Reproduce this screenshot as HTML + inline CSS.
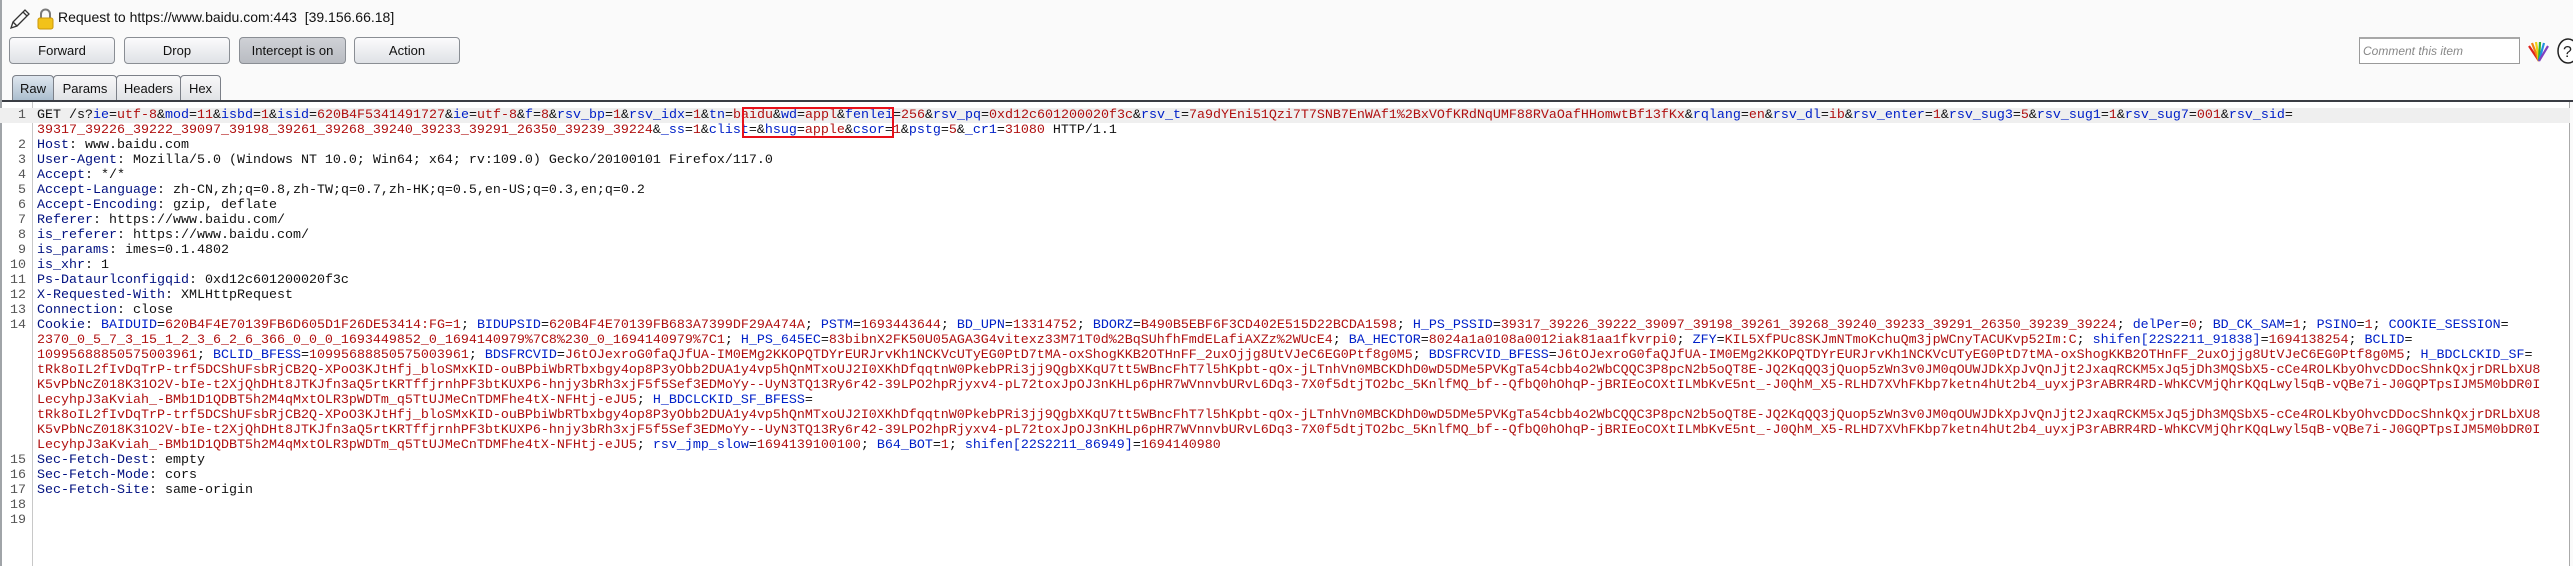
<!DOCTYPE html>
<html><head><meta charset="utf-8"><style>
*{margin:0;padding:0;box-sizing:border-box}
body{width:2573px;height:566px;overflow:hidden;background:#fafafa;font-family:"Liberation Sans",Arial,sans-serif;position:relative}
.lb{position:absolute;left:0;top:0;width:2px;height:566px;background:#a0a4a8}
.title{position:absolute;left:58px;top:9px;font-size:14px;color:#111;white-space:pre}
.btn{position:absolute;top:37px;height:27px;border:1px solid #8a8e94;border-radius:4px;background:linear-gradient(#fbfbfc,#dfe2e6);font-size:13px;color:#111;text-align:center;line-height:25px}
.btn.on{background:linear-gradient(#cfd1d6,#b9bcc2)}
.tab{position:absolute;top:75px;height:26px;border:1px solid #7c8088;border-bottom:none;border-radius:4px 4px 0 0;background:linear-gradient(#f8f8f9,#e0e2e5);font-size:13px;text-align:center;line-height:26px;color:#111}
.tab.sel{background:linear-gradient(#dfe7ef,#a9bccd)}
.edtop{position:absolute;left:2px;right:0;top:100px;height:2px;background:#3a3d44}
.ed{position:absolute;left:2px;top:102px;right:3px;height:464px;background:#fff;border-right:1px solid #aaa}
.gut{position:absolute;left:32px;top:102px;width:1px;height:464px;background:#c8c8c8}
.rows{position:absolute;left:0;top:108px;width:2570px}
.r{height:15px;line-height:15px;font-family:"Liberation Mono","Courier New",monospace;font-size:13.33px;white-space:pre;overflow:hidden;position:relative;color:#111}
.r.cur{background:#efefef}
.r i{font-style:normal;position:absolute;left:0;width:26px;text-align:right;color:#555}
.r b{font-weight:normal;position:absolute;left:37px;top:0}
.n{color:#0020c8}.v{color:#b01010}.h{color:#001080}
.box{position:absolute;left:742px;top:107px;width:152px;height:31px;border:2px solid #e8101a}
.cmt{position:absolute;left:2359px;top:37px;width:161px;height:27px;border:1px solid #9a9a9a;border-top:2px solid #a8a8a8;background:#fff;font-size:12px;font-style:italic;color:#888;line-height:24px;padding-left:3px}
</style></head><body>
<div class="lb"></div>
<svg style="position:absolute;left:8px;top:8px" width="24" height="22" viewBox="0 0 24 22"><path d="M3 20 L5 14 L17 2 L21 6 L9 18 Z M5 14 L9 18 M15 4 L19 8" fill="none" stroke="#333" stroke-width="1.3"/></svg>
<svg style="position:absolute;left:37px;top:8px" width="17" height="22" viewBox="0 0 17 22"><path d="M4 10 V6 a4.5 4.5 0 0 1 9 0 V10" fill="none" stroke="#7a7a7a" stroke-width="2"/><rect x="1" y="10" width="15" height="11" rx="2" fill="#f2c21a" stroke="#c9960a"/></svg>
<div class="title">Request to https://www.baidu.com:443  [39.156.66.18]</div>
<div class="btn" style="left:9px;width:106px">Forward</div>
<div class="btn" style="left:124px;width:106px">Drop</div>
<div class="btn on" style="left:239px;width:107px">Intercept is on</div>
<div class="btn" style="left:264px;display:none"></div>
<div class="btn" style="left:354px;width:106px">Action</div>
<div class="cmt">Comment this item</div>
<svg style="position:absolute;left:2526px;top:40px" width="26" height="22" viewBox="0 0 26 22"><g stroke-width="2.2" fill="none"><path d="M13 21 L3 6" stroke="#e0201a"/><path d="M13 21 L6 3" stroke="#f08010"/><path d="M13 21 L10 2" stroke="#f0d010"/><path d="M13 21 L14 2" stroke="#30b030"/><path d="M13 21 L18 3" stroke="#2090e0"/><path d="M13 21 L22 6" stroke="#8040c0"/></g></svg>
<svg style="position:absolute;left:2556px;top:38px" width="17" height="26" viewBox="0 0 17 26"><ellipse cx="12" cy="13" rx="10" ry="12" fill="#fff" stroke="#222" stroke-width="1.5"/><text x="7" y="19" font-family="Liberation Sans" font-size="16" fill="#222">?</text></svg>
<div class="tab sel" style="left:12px;width:42px">Raw</div>
<div class="tab" style="left:53px;width:64px">Params</div>
<div class="tab" style="left:116px;width:65px">Headers</div>
<div class="tab" style="left:180px;width:41px">Hex</div>
<div class="edtop"></div>
<div class="ed"></div>
<div class="gut"></div>
<div class="rows">
<div class="r cur"><i>1</i><b>GET /s?<span class="n">ie</span>=<span class="v">utf-8</span>&amp;<span class="n">mod</span>=<span class="v">11</span>&amp;<span class="n">isbd</span>=<span class="v">1</span>&amp;<span class="n">isid</span>=<span class="v">620B4F5341491727</span>&amp;<span class="n">ie</span>=<span class="v">utf-8</span>&amp;<span class="n">f</span>=<span class="v">8</span>&amp;<span class="n">rsv_bp</span>=<span class="v">1</span>&amp;<span class="n">rsv_idx</span>=<span class="v">1</span>&amp;<span class="n">tn</span>=<span class="v">baidu</span>&amp;<span class="n">wd</span>=<span class="v">appl</span>&amp;<span class="n">fenlei</span>=<span class="v">256</span>&amp;<span class="n">rsv_pq</span>=<span class="v">0xd12c601200020f3c</span>&amp;<span class="n">rsv_t</span>=<span class="v">7a9dYEni51Qzi7T7SNB7EnWAf1%2BxVOfKRdNqUMF88RVaOafHHomwtBf13fKx</span>&amp;<span class="n">rqlang</span>=<span class="v">en</span>&amp;<span class="n">rsv_dl</span>=<span class="v">ib</span>&amp;<span class="n">rsv_enter</span>=<span class="v">1</span>&amp;<span class="n">rsv_sug3</span>=<span class="v">5</span>&amp;<span class="n">rsv_sug1</span>=<span class="v">1</span>&amp;<span class="n">rsv_sug7</span>=<span class="v">001</span>&amp;<span class="n">rsv_sid</span>=</b></div>
<div class="r"><b><span class="v">39317_39226_39222_39097_39198_39261_39268_39240_39233_39291_26350_39239_39224</span>&amp;<span class="n">_ss</span>=<span class="v">1</span>&amp;<span class="n">clist</span>=&amp;<span class="n">hsug</span>=<span class="v">apple</span>&amp;<span class="n">csor</span>=<span class="v">1</span>&amp;<span class="n">pstg</span>=<span class="v">5</span>&amp;<span class="n">_cr1</span>=<span class="v">31080</span> HTTP/1.1</b></div>
<div class="r"><i>2</i><b><span class="h">Host</span>: www.baidu.com</b></div>
<div class="r"><i>3</i><b><span class="h">User-Agent</span>: Mozilla/5.0 (Windows NT 10.0; Win64; x64; rv:109.0) Gecko/20100101 Firefox/117.0</b></div>
<div class="r"><i>4</i><b><span class="h">Accept</span>: */*</b></div>
<div class="r"><i>5</i><b><span class="h">Accept-Language</span>: zh-CN,zh;q=0.8,zh-TW;q=0.7,zh-HK;q=0.5,en-US;q=0.3,en;q=0.2</b></div>
<div class="r"><i>6</i><b><span class="h">Accept-Encoding</span>: gzip, deflate</b></div>
<div class="r"><i>7</i><b><span class="h">Referer</span>: https://www.baidu.com/</b></div>
<div class="r"><i>8</i><b><span class="h">is_referer</span>: https://www.baidu.com/</b></div>
<div class="r"><i>9</i><b><span class="h">is_params</span>: imes=0.1.4802</b></div>
<div class="r"><i>10</i><b><span class="h">is_xhr</span>: 1</b></div>
<div class="r"><i>11</i><b><span class="h">Ps-Dataurlconfigqid</span>: 0xd12c601200020f3c</b></div>
<div class="r"><i>12</i><b><span class="h">X-Requested-With</span>: XMLHttpRequest</b></div>
<div class="r"><i>13</i><b><span class="h">Connection</span>: close</b></div>
<div class="r"><i>14</i><b><span class="h">Cookie</span>: <span class="n">BAIDUID</span>=<span class="v">620B4F4E70139FB6D605D1F26DE53414:FG=1</span>; <span class="n">BIDUPSID</span>=<span class="v">620B4F4E70139FB683A7399DF29A474A</span>; <span class="n">PSTM</span>=<span class="v">1693443644</span>; <span class="n">BD_UPN</span>=<span class="v">13314752</span>; <span class="n">BDORZ</span>=<span class="v">B490B5EBF6F3CD402E515D22BCDA1598</span>; <span class="n">H_PS_PSSID</span>=<span class="v">39317_39226_39222_39097_39198_39261_39268_39240_39233_39291_26350_39239_39224</span>; <span class="n">delPer</span>=<span class="v">0</span>; <span class="n">BD_CK_SAM</span>=<span class="v">1</span>; <span class="n">PSINO</span>=<span class="v">1</span>; <span class="n">COOKIE_SESSION</span>=</b></div>
<div class="r"><b><span class="v">2370_0_5_7_3_15_1_2_3_6_2_6_366_0_0_0_1693449852_0_1694140979%7C8%230_0_1694140979%7C1</span>; <span class="n">H_PS_645EC</span>=<span class="v">83bibnX2FK50U05AGA3G4vitexz33M71T0d%2BqSUhfhFmdELafiAXZz%2WUcE4</span>; <span class="n">BA_HECTOR</span>=<span class="v">8024a1a0108a0012iak81aa1fkvrpi0</span>; <span class="n">ZFY</span>=<span class="v">KIL5XfPUc8SKJmNTmoKchuQm3jpWCnyTACUKvp52Im:C</span>; <span class="n">shifen[22S2211_91838]</span>=<span class="v">1694138254</span>; <span class="n">BCLID</span>=</b></div>
<div class="r"><b><span class="v">10995688850575003961</span>; <span class="n">BCLID_BFESS</span>=<span class="v">10995688850575003961</span>; <span class="n">BDSFRCVID</span>=<span class="v">J6tOJexroG0faQJfUA-IM0EMg2KKOPQTDYrEURJrvKh1NCKVcUTyEG0PtD7tMA-oxShogKKB2OTHnFF_2uxOjjg8UtVJeC6EG0Ptf8g0M5</span>; <span class="n">BDSFRCVID_BFESS</span>=<span class="v">J6tOJexroG0faQJfUA-IM0EMg2KKOPQTDYrEURJrvKh1NCKVcUTyEG0PtD7tMA-oxShogKKB2OTHnFF_2uxOjjg8UtVJeC6EG0Ptf8g0M5</span>; <span class="n">H_BDCLCKID_SF</span>=</b></div>
<div class="r"><b class="v">tRk8oIL2fIvDqTrP-trf5DCShUFsbRjCB2Q-XPoO3KJtHfj_bloSMxKID-ouBPbiWbRTbxbgy4op8P3yObb2DUA1y4vp5hQnMTxoUJ2I0XKhDfqqtnW0PkebPRi3jj9QgbXKqU7tt5WBncFhT7l5hKpbt-qOx-jLTnhVn0MBCKDhD0wD5DMe5PVKgTa54cbb4o2WbCQQC3P8pcN2b5oQT8E-JQ2KqQQ3jQuop5zWn3v0JM0qOUWJDkXpJvQnJjt2JxaqRCKM5xJq5jDh3MQSbX5-cCe4ROLKbyOhvcDDocShnkQxjrDRLbXU8</b></div>
<div class="r"><b class="v">K5vPbNcZ018K31O2V-bIe-t2XjQhDHt8JTKJfn3aQ5rtKRTffjrnhPF3btKUXP6-hnjy3bRh3xjF5f5Sef3EDMoYy--UyN3TQ13Ry6r42-39LPO2hpRjyxv4-pL72toxJpOJ3nKHLp6pHR7WVnnvbURvL6Dq3-7X0f5dtjTO2bc_5KnlfMQ_bf--QfbQ0hOhqP-jBRIEoCOXtILMbKvE5nt_-J0QhM_X5-RLHD7XVhFKbp7ketn4hUt2b4_uyxjP3rABRR4RD-WhKCVMjQhrKQqLwyl5qB-vQBe7i-J0GQPTpsIJM5M0bDR0I</b></div>
<div class="r"><b><span class="v">LecyhpJ3aKviah_-BMb1D1QDBT5h2M4qMxtOLR3pWDTm_q5TtUJMeCnTDMFhe4tX-NFHtj-eJU5</span>; <span class="n">H_BDCLCKID_SF_BFESS</span>=</b></div>
<div class="r"><b class="v">tRk8oIL2fIvDqTrP-trf5DCShUFsbRjCB2Q-XPoO3KJtHfj_bloSMxKID-ouBPbiWbRTbxbgy4op8P3yObb2DUA1y4vp5hQnMTxoUJ2I0XKhDfqqtnW0PkebPRi3jj9QgbXKqU7tt5WBncFhT7l5hKpbt-qOx-jLTnhVn0MBCKDhD0wD5DMe5PVKgTa54cbb4o2WbCQQC3P8pcN2b5oQT8E-JQ2KqQQ3jQuop5zWn3v0JM0qOUWJDkXpJvQnJjt2JxaqRCKM5xJq5jDh3MQSbX5-cCe4ROLKbyOhvcDDocShnkQxjrDRLbXU8</b></div>
<div class="r"><b class="v">K5vPbNcZ018K31O2V-bIe-t2XjQhDHt8JTKJfn3aQ5rtKRTffjrnhPF3btKUXP6-hnjy3bRh3xjF5f5Sef3EDMoYy--UyN3TQ13Ry6r42-39LPO2hpRjyxv4-pL72toxJpOJ3nKHLp6pHR7WVnnvbURvL6Dq3-7X0f5dtjTO2bc_5KnlfMQ_bf--QfbQ0hOhqP-jBRIEoCOXtILMbKvE5nt_-J0QhM_X5-RLHD7XVhFKbp7ketn4hUt2b4_uyxjP3rABRR4RD-WhKCVMjQhrKQqLwyl5qB-vQBe7i-J0GQPTpsIJM5M0bDR0I</b></div>
<div class="r"><b><span class="v">LecyhpJ3aKviah_-BMb1D1QDBT5h2M4qMxtOLR3pWDTm_q5TtUJMeCnTDMFhe4tX-NFHtj-eJU5</span>; <span class="n">rsv_jmp_slow</span>=<span class="v">1694139100100</span>; <span class="n">B64_BOT</span>=<span class="v">1</span>; <span class="n">shifen[22S2211_86949]</span>=<span class="v">1694140980</span></b></div>
<div class="r"><i>15</i><b><span class="h">Sec-Fetch-Dest</span>: empty</b></div>
<div class="r"><i>16</i><b><span class="h">Sec-Fetch-Mode</span>: cors</b></div>
<div class="r"><i>17</i><b><span class="h">Sec-Fetch-Site</span>: same-origin</b></div>
<div class="r"><i>18</i></div>
<div class="r"><i>19</i></div>
</div>
<div class="box"></div>
</body></html>
